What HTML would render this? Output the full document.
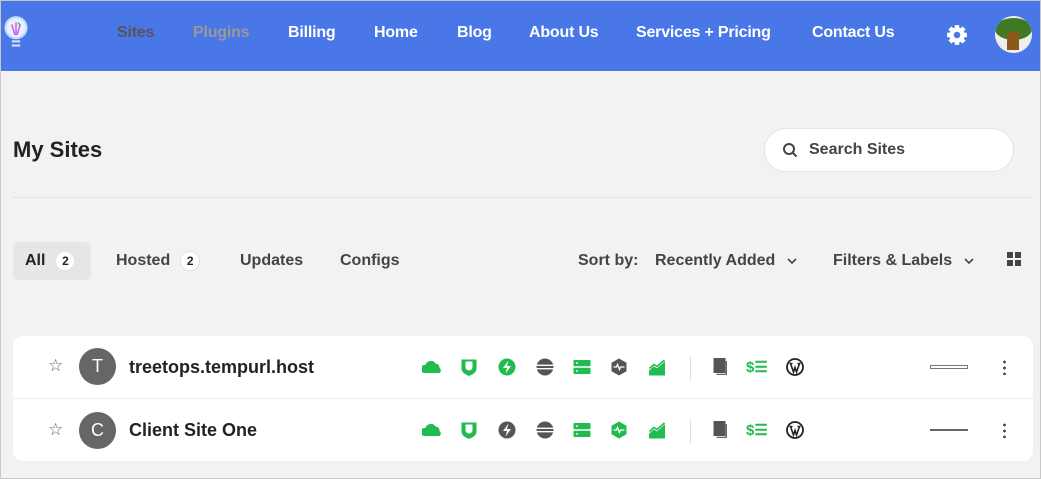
<!DOCTYPE html>
<html><head><meta charset="utf-8"><style>
*{margin:0;padding:0;box-sizing:border-box}
body{width:1041px;height:479px;background:#f2f2f2;font-family:"Liberation Sans",Arial,sans-serif;position:relative;overflow:hidden}
.a{position:absolute}
nav{position:absolute;left:0;top:0;width:1041px;height:71px;background:#4977e8}
.n{position:absolute;top:24px;font-size:16px;font-weight:bold;color:#fff;white-space:nowrap;letter-spacing:-0.2px}
.t{font-weight:bold;color:#444;font-size:16px;position:absolute;white-space:nowrap;display:flex;align-items:center;height:20px}
.b{display:inline-block;width:20px;height:20px;border-radius:50%;background:#fff;font-size:12px;text-align:center;line-height:18px;color:#222;margin-left:10px;border:1px solid #e4e4e4}
.ic{position:absolute;width:20px;height:20px}
.ch{margin-left:12px}
</style></head><body>
<nav>
<svg class="a" style="left:3px;top:14px" width="26" height="40" viewBox="0 0 24 38"><circle cx="12" cy="13" r="10" fill="#eef" stroke="#bdf" stroke-width="2"/><path d="M8 10l3 10M12 8v12M16 10l-3 10" stroke="#c6e" stroke-width="1.5" fill="none"/><path d="M14 8l2 3" stroke="#2c6" stroke-width="1.5"/><rect x="8" y="25" width="8" height="2" fill="#dde"/><rect x="8" y="29" width="8" height="2" fill="#dde"/></svg>
<div class="n" style="left:117px;color:#555">Sites</div>
<div class="n" style="left:193px;color:#999">Plugins</div>
<div class="n" style="left:288px">Billing</div>
<div class="n" style="left:374px">Home</div>
<div class="n" style="left:457px">Blog</div>
<div class="n" style="left:529px">About Us</div>
<div class="n" style="left:636px">Services + Pricing</div>
<div class="n" style="left:812px">Contact Us</div>
<svg class="a" style="left:946px;top:24px" width="22" height="22" viewBox="0 0 20 20"><g fill="#fff"><circle cx="10" cy="10" r="7"/><g stroke="#fff" stroke-width="4"><path d="M10 1v18M1 10h18M3.6 3.6l12.8 12.8M16.4 3.6L3.6 16.4"/></g></g><circle cx="10" cy="10" r="3" fill="#4977e8"/></svg>
<div class="a" style="left:995px;top:16px;width:37px;height:37px;border-radius:50%;background:#eee;overflow:hidden"><div class="a" style="left:0px;top:2px;width:37px;height:22px;border-radius:50%;background:#3f7a23"></div><div class="a" style="left:12px;top:16px;width:12px;height:18px;background:#8a5a1a"></div></div>
</nav>
<div class="a" style="left:13px;top:137px;font-size:22px;font-weight:bold;color:#222">My Sites</div>
<div class="a" style="left:764px;top:128px;width:250px;height:44px;border-radius:22px;background:#fff;border:1px solid #e4e4e4"></div>
<svg class="a" style="left:782px;top:142px" width="16" height="16" viewBox="0 0 16 16"><circle cx="7" cy="7" r="5" stroke="#444" stroke-width="2" fill="none"/><path d="M11 11l3.5 3.5" stroke="#444" stroke-width="2"/></svg>
<div class="t" style="left:809px;top:140px">Search Sites</div>
<div class="a" style="left:13px;top:197px;width:1018px;height:1px;background:#e2e2e2"></div>
<div class="a" style="left:13px;top:242px;width:78px;height:38px;border-radius:6px;background:#e6e6e6"></div>
<div class="t" style="left:25px;top:251px;color:#222">All<span class="b">2</span></div>
<div class="t" style="left:116px;top:251px">Hosted<span class="b">2</span></div>
<div class="t" style="left:240px;top:251px">Updates</div>
<div class="t" style="left:340px;top:251px">Configs</div>
<div class="t" style="left:578px;top:251px">Sort by:</div>
<div class="t" style="left:655px;top:251px">Recently Added <svg class="ch" width="10" height="6"><path d="M1 1l4 4 4-4" stroke="#444" stroke-width="1.6" fill="none"/></svg></div>
<div class="t" style="left:833px;top:251px">Filters &amp; Labels <svg class="ch" width="10" height="6"><path d="M1 1l4 4 4-4" stroke="#444" stroke-width="1.6" fill="none"/></svg></div>
<svg class="a" style="left:1007px;top:252px" width="15" height="15"><rect width="6" height="6" fill="#444"/><rect x="8" width="6" height="6" fill="#444"/><rect y="8" width="6" height="6" fill="#444"/><rect x="8" y="8" width="6" height="6" fill="#444"/></svg>
<div class="a" style="left:13px;top:336px;width:1020px;height:125px;border-radius:10px;background:#fff"></div>
<div class="a" style="left:13px;top:398px;width:1020px;height:1px;background:#eee"></div>

<div class="a" style="left:48px;top:356px;color:#666;font-size:17px">☆</div>
<div class="a" style="left:79px;top:348px;width:37px;height:37px;border-radius:50%;background:#666;color:#fff;text-align:center;line-height:37px;font-size:18px">T</div>
<div class="a" style="left:129px;top:357px;font-size:18px;font-weight:bold;color:#222">treetops.tempurl.host</div>
<div class="a" style="left:48px;top:420px;color:#666;font-size:17px">☆</div>
<div class="a" style="left:79px;top:412px;width:37px;height:37px;border-radius:50%;background:#666;color:#fff;text-align:center;line-height:37px;font-size:18px">C</div>
<div class="a" style="left:129px;top:420px;font-size:18px;font-weight:bold;color:#222">Client Site One</div>

<svg width="0" height="0" style="position:absolute"><defs>
<g id="cloud"><path d="M2 16a4 4 0 0 1 1.5-8 5.5 5.5 0 0 1 10-1.5 4 4 0 0 1 4 4.5 3 3 0 0 1 0 5z"/></g>
<g id="shield"><path d="M2.5 2.5h15v9c0 4-4 6-7.5 7.5-3.5-1.5-7.5-3.5-7.5-7.5zM6.5 4.5v5.5a3.5 3.5 0 0 0 7 0V4.5z" fill-rule="evenodd"/></g>
<g id="bolt"><circle cx="10" cy="10" r="8.5"/><path d="M11.5 3.5l-5.5 7.5h4l-1.5 5.5 5.5-7.5h-4z" fill="#fff"/></g>
<g id="stripes"><circle cx="10" cy="10" r="8.5"/><path d="M1 8.3h18M1 11.7h18" stroke="#fff" stroke-width="1.4"/></g>
<g id="server"><rect x="1.5" y="3" width="17" height="6.3" rx="1"/><rect x="1.5" y="10.7" width="17" height="6.3" rx="1"/><path d="M4 6.1h2M4 13.9h2" stroke="#fff" stroke-width="1.2"/></g>
<g id="hex"><path d="M10 1.5l7.5 4.25v8.5L10 18.5l-7.5-4.25v-8.5z"/><path d="M4.5 10h3l1-2.5 2 5 1-2.5h4" stroke="#fff" stroke-width="1.3" fill="none"/></g>
<g id="chart"><path d="M2.5 18v-4l4.5-4 3 2 7.5-6.5v12.5z"/><path d="M2.5 11.5l4.5-4 3 2 7.5-6.5" stroke-width="1.6" fill="none"/></g>
<g id="docs"><rect x="4" y="1.5" width="11" height="14"/><path d="M16.3 4v13.3H6.5" stroke-width="1.2" fill="none"/></g>
<g id="wp"><circle cx="10" cy="10" r="8" fill="none" stroke-width="1.8"/><path d="M5.5 6.5l3 8.5 1.5-4.5 1.5 4.5 3-8.5M4.5 6.5h3M12.5 6.5h3" stroke-width="1.6" fill="none"/></g>
</defs></svg>

<svg class="ic" style="left:422px;top:357px" fill="#22bb4f"><use href="#cloud"/></svg>
<svg class="ic" style="left:459px;top:357px" fill="#22bb4f"><use href="#shield"/></svg>
<svg class="ic" style="left:497px;top:357px" fill="#22bb4f"><use href="#bolt"/></svg>
<svg class="ic" style="left:535px;top:357px" fill="#555"><use href="#stripes"/></svg>
<svg class="ic" style="left:572px;top:357px" fill="#22bb4f"><use href="#server"/></svg>
<svg class="ic" style="left:609px;top:357px" fill="#555"><use href="#hex"/></svg>
<svg class="ic" style="left:647px;top:357px" fill="#22bb4f" stroke="#22bb4f"><use href="#chart"/></svg>
<div class="a" style="left:690px;top:356px;width:1px;height:25px;background:#e0e0e0"></div>
<svg class="ic" style="left:710px;top:357px" fill="#555" stroke="#555"><use href="#docs"/></svg>
<div class="a" style="left:746px;top:358px;font-weight:bold;color:#22bb4f;font-size:15px">$☰</div>
<svg class="ic" style="left:785px;top:357px" stroke="#222" fill="none"><use href="#wp"/></svg>
<div class="a" style="left:930px;top:365px;width:38px;height:4px;border:1px solid #777"></div>
<div class="a" style="left:1003px;top:359px;width:3px;height:16px;background:radial-gradient(circle,#444 1.3px,transparent 1.5px) 0 0/3px 6px"></div>

<svg class="ic" style="left:422px;top:420px" fill="#22bb4f"><use href="#cloud"/></svg>
<svg class="ic" style="left:459px;top:420px" fill="#22bb4f"><use href="#shield"/></svg>
<svg class="ic" style="left:497px;top:420px" fill="#555"><use href="#bolt"/></svg>
<svg class="ic" style="left:535px;top:420px" fill="#555"><use href="#stripes"/></svg>
<svg class="ic" style="left:572px;top:420px" fill="#22bb4f"><use href="#server"/></svg>
<svg class="ic" style="left:609px;top:420px" fill="#22bb4f"><use href="#hex"/></svg>
<svg class="ic" style="left:647px;top:420px" fill="#22bb4f" stroke="#22bb4f"><use href="#chart"/></svg>
<div class="a" style="left:690px;top:419px;width:1px;height:25px;background:#e0e0e0"></div>
<svg class="ic" style="left:710px;top:420px" fill="#555" stroke="#555"><use href="#docs"/></svg>
<div class="a" style="left:746px;top:421px;font-weight:bold;color:#22bb4f;font-size:15px">$☰</div>
<svg class="ic" style="left:785px;top:420px" stroke="#222" fill="none"><use href="#wp"/></svg>
<div class="a" style="left:930px;top:429px;width:38px;height:2px;background:#666"></div>
<div class="a" style="left:1003px;top:422px;width:3px;height:16px;background:radial-gradient(circle,#444 1.3px,transparent 1.5px) 0 0/3px 6px"></div>
<div class="a" style="left:0;top:0;width:1041px;height:479px;border:1px solid #c8c8c8;pointer-events:none"></div>
</body></html>
